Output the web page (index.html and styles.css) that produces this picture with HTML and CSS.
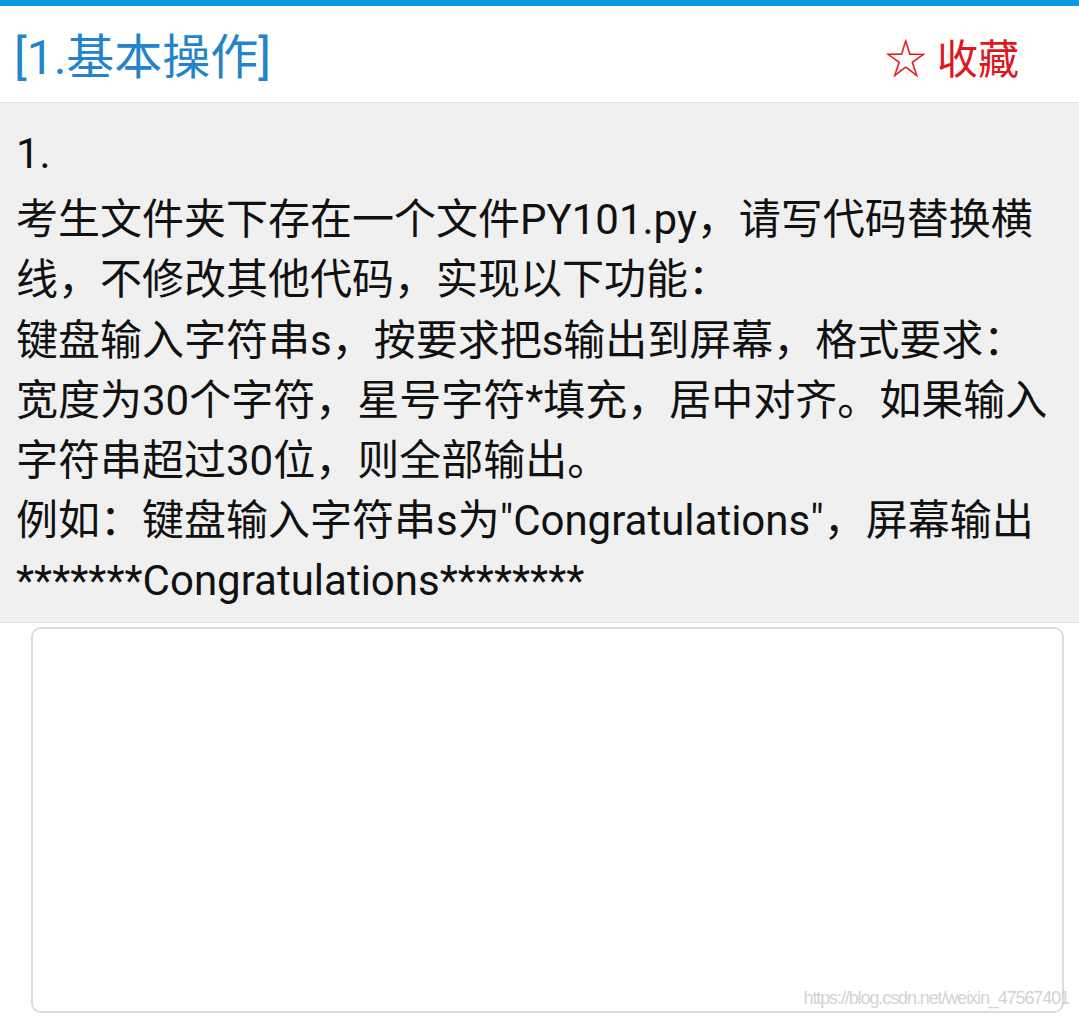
FILE: index.html
```html
<!DOCTYPE html>
<html lang="zh-CN">
<head>
    <meta charset="UTF-8">
    <meta name="viewport" content="width=device-width, initial-scale=1.0">
    <title>1.基本操作</title>
    <link rel="stylesheet" href="styles.css">
</head>
<body>
    <div class="topbar"></div>
    <div class="header">
        <div class="title">[1.基本操作]</div>
        <div class="fav"><span class="star">☆</span> 收藏</div>
    </div>

    <div class="question">
        <div class="line num">1.</div>
        <div class="line">考生文件夹下存在一个文件PY101.py，请写代码替换横</div>
        <div class="line">线，不修改其他代码，实现以下功能：</div>
        <div class="line">键盘输入字符串s，按要求把s输出到屏幕，格式要求：</div>
        <div class="line">宽度为30个字符，星号字符*填充，居中对齐。如果输入</div>
        <div class="line">字符串超过30位，则全部输出。</div>
        <div class="line">例如：键盘输入字符串s为"Congratulations"，屏幕输出</div>
        <div class="line">*******Congratulations********</div>
    </div>

    <div class="answer-wrap">
        <textarea class="answer"></textarea>
        <span class="watermark">https://blog.csdn.net/weixin_47567401</span>
    </div>
</body>
</html>
```
FILE: styles.css
```css
body {
    margin: 0;
    background: #fff;
    font-family: Roboto, "Noto Sans CJK SC", sans-serif;
    width: 1079px;
}
.topbar {
    height: 6px;
    background: #0a9be6;
}
.header {
    height: 97px;
    display: flex;
    align-items: center;
    justify-content: space-between;
    padding: 0 60px 0 14px;
    border-bottom: 1px solid #e4e4e4;
    box-sizing: border-box;
}
.title {
    color: #2383cb;
    font-size: 48px;
    margin-top: -2px;
}
.fav {
    color: #e0161c;
    font-size: 41px;
    margin-top: 2px;
}
.star {
    font-size: 42px;
}
.question {
    background: #f0f0f0;
    padding: 21px 0 10px 16px;
    color: #111;
    font-size: 42px;
    line-height: 60.2px;
    border-bottom: 1px solid #e2e2e2;
}
.line {
    white-space: nowrap;
}
.num {
    margin-bottom: 6px;
}
.answer-wrap {
    position: relative;
    padding: 4px 15px 0 31px;
}
.answer {
    display: block;
    width: 100%;
    height: 386px;
    box-sizing: border-box;
    border: 2px solid #dcdcdc;
    border-radius: 10px;
    background: #fff;
    resize: none;
    outline: none;
}
.watermark {
    position: absolute;
    right: 10px;
    bottom: 4px;
    font-family: "Liberation Sans", Arial, sans-serif;
    font-size: 18px;
    letter-spacing: -1.1px;
    color: rgba(205, 205, 205, 0.9);
}
```
